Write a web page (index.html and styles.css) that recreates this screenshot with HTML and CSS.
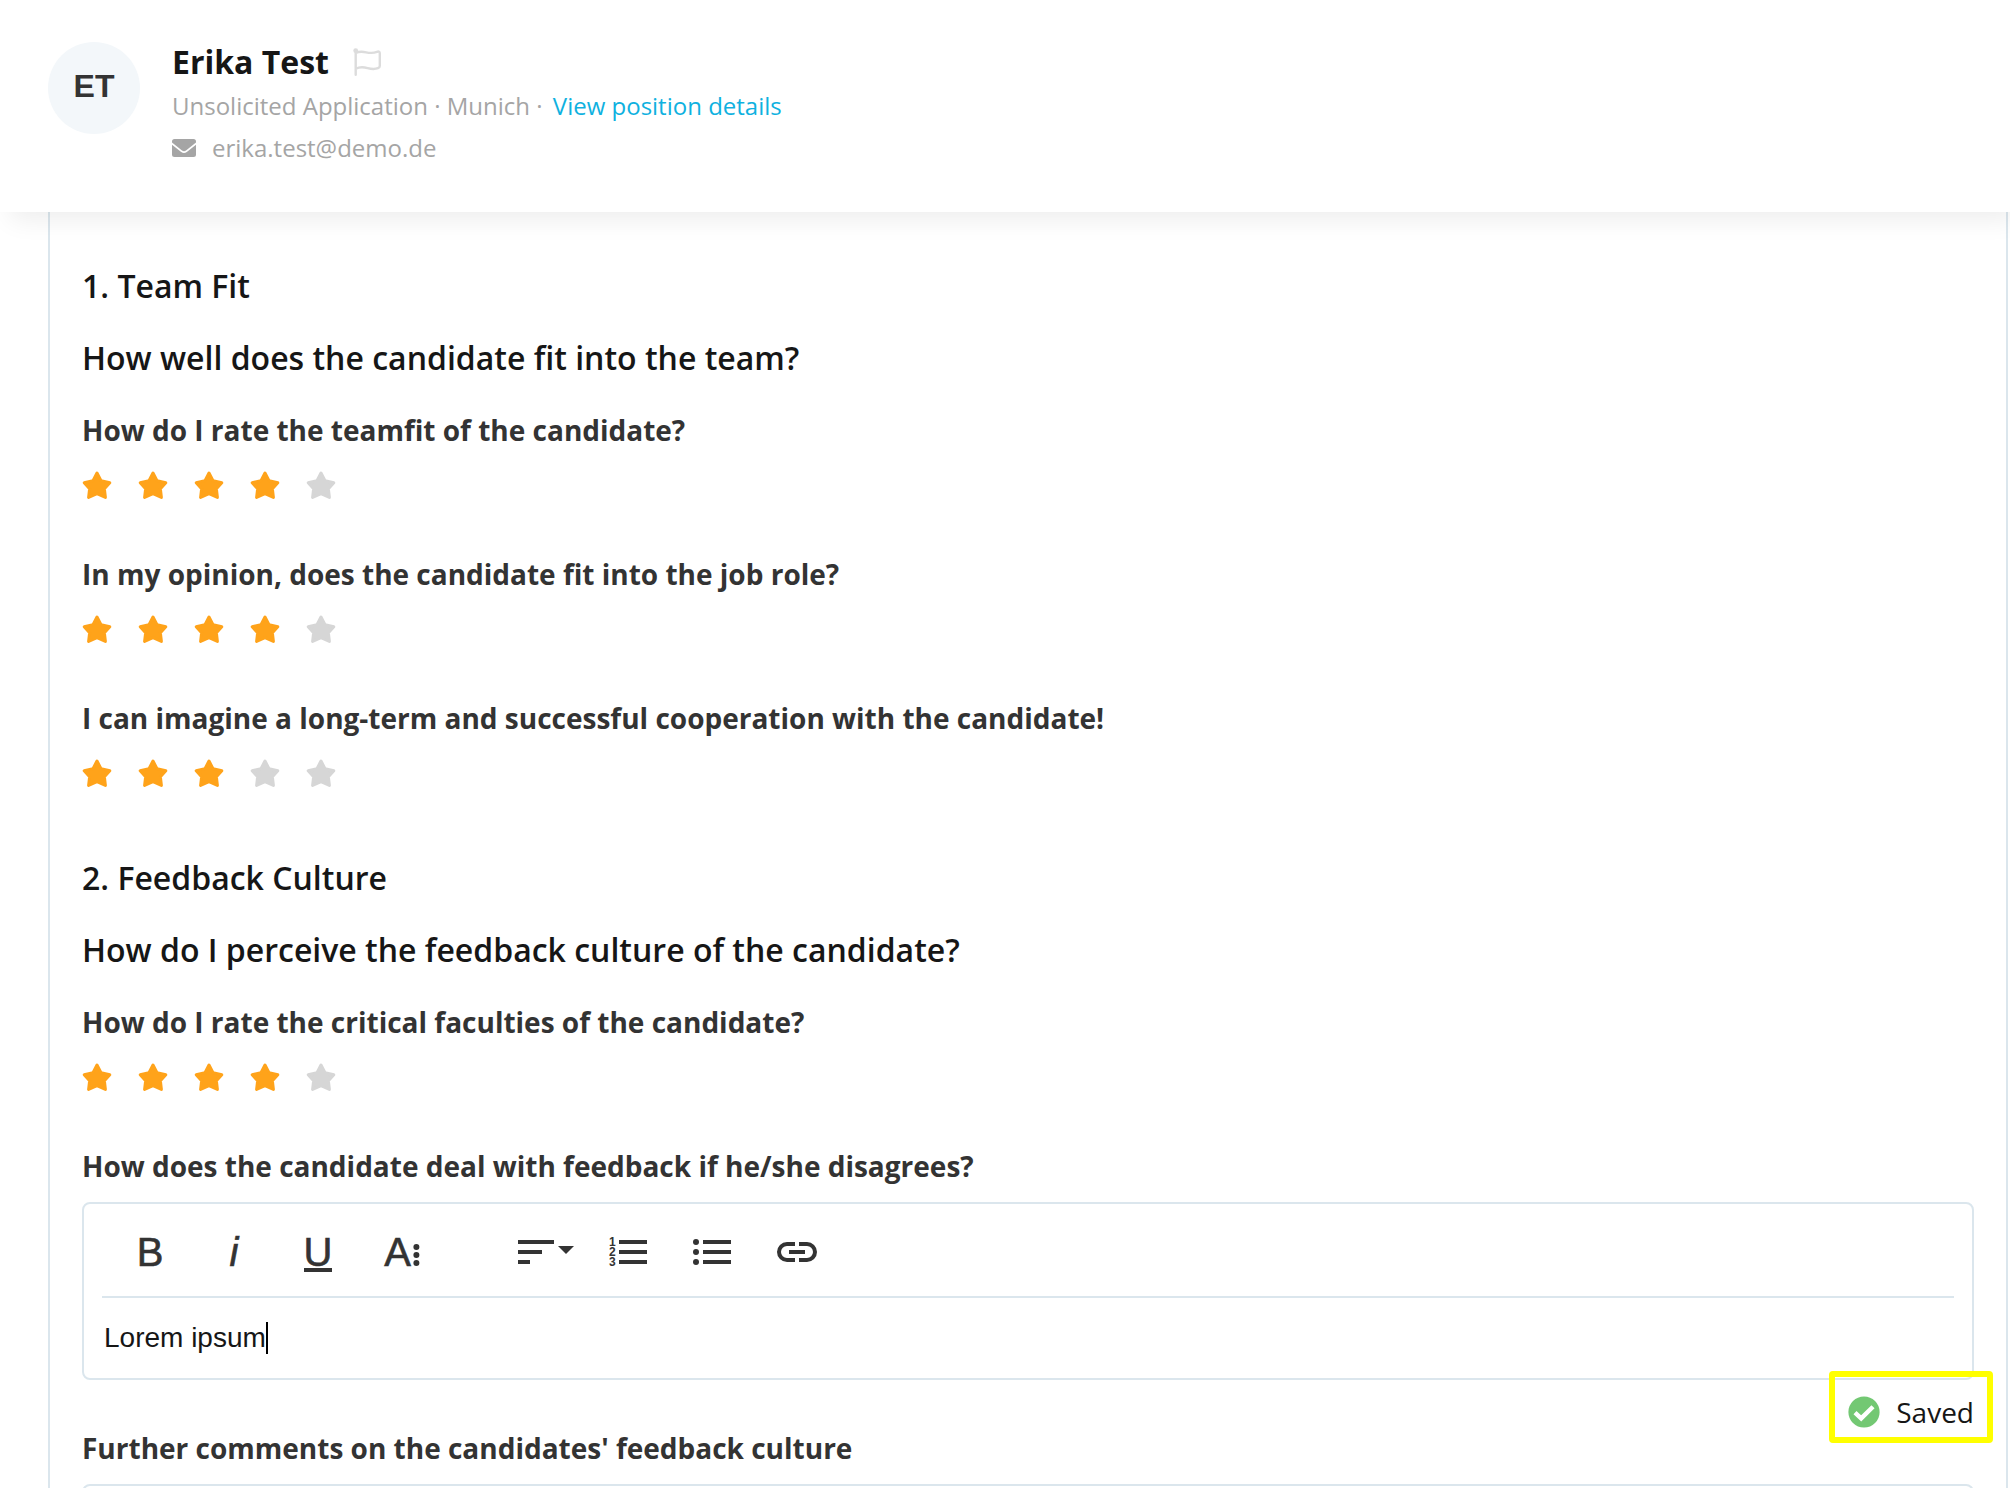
FILE: index.html
```html
<!DOCTYPE html>
<html lang="en">
<head>
    <meta charset="UTF-8">
    <meta name="viewport" content="width=device-width, initial-scale=1.0">
    <title>Erika Test</title>
    <link rel="stylesheet" href="styles.css">
</head>
<body>
    <svg width="0" height="0" class="sprite" aria-hidden="true">
        <symbol id="star" viewBox="0 0 30 30">
            <path d="M15 3 L19 10.6 L27.8 12.8 L22.4 18.8 L23.4 27.4 L15 23.6 L6.6 27.4 L7.6 18.8 L2.2 12.8 L11 10.6 Z" fill="currentColor" stroke="currentColor" stroke-width="3" stroke-linejoin="round"/>
        </symbol>
    </svg>

    <header class="header">
        <div class="avatar">ET</div>
        <div class="candidate">
            <div class="name-row">
                <h1>Erika Test</h1>
                <button class="flag" aria-label="Flag candidate">
                    <svg viewBox="0 0 28 28" width="28" height="28">
                        <circle cx="2.7" cy="2.7" r="2.4" fill="currentColor"/>
                        <path d="M2.7 3 V26.7 M2.7 5 C11 1 15 7.5 24 3.8 Q26.8 2.8 26.8 5.5 V18 Q26.8 19.5 25 20.2 C16 23.5 12 16 2.7 20.8" fill="none" stroke="currentColor" stroke-width="2.4" stroke-linecap="round"/>
                    </svg>
                </button>
            </div>
            <p>Unsolicited Application · Munich · <a href="#">View position details</a></p>
            <p class="mail">
                <svg viewBox="0 0 24 18" width="24" height="18">
                    <path d="M2.5 0 H21.5 Q24 0 24 2.5 V3.5 L14 11.6 Q12 13 10 11.6 L0 3.5 V2.5 Q0 0 2.5 0 Z M0 5.8 L9.2 13 Q12 15 14.8 13 L24 5.8 V15.5 Q24 18 21.5 18 H2.5 Q0 18 0 15.5 Z" fill="currentColor"/>
                </svg>
                erika.test@demo.de
            </p>
        </div>
    </header>

    <main class="content">
        <form class="panel">
            <section>
                <h2>1. Team Fit</h2>
                <h2>How well does the candidate fit into the team?</h2>

                <fieldset>
                    <legend>How do I rate the teamfit of the candidate?</legend>
                    <div class="stars">
                        <label class="star"><input type="radio" name="teamfit" aria-label="1 star"><svg><use href="#star"/></svg></label>
                        <label class="star"><input type="radio" name="teamfit" aria-label="2 stars"><svg><use href="#star"/></svg></label>
                        <label class="star"><input type="radio" name="teamfit" aria-label="3 stars"><svg><use href="#star"/></svg></label>
                        <label class="star"><input type="radio" name="teamfit" aria-label="4 stars" checked><svg><use href="#star"/></svg></label>
                        <label class="star"><input type="radio" name="teamfit" aria-label="5 stars"><svg><use href="#star"/></svg></label>
                    </div>
                </fieldset>

                <fieldset>
                    <legend>In my opinion, does the candidate fit into the job role?</legend>
                    <div class="stars">
                        <label class="star"><input type="radio" name="role" aria-label="1 star"><svg><use href="#star"/></svg></label>
                        <label class="star"><input type="radio" name="role" aria-label="2 stars"><svg><use href="#star"/></svg></label>
                        <label class="star"><input type="radio" name="role" aria-label="3 stars"><svg><use href="#star"/></svg></label>
                        <label class="star"><input type="radio" name="role" aria-label="4 stars" checked><svg><use href="#star"/></svg></label>
                        <label class="star"><input type="radio" name="role" aria-label="5 stars"><svg><use href="#star"/></svg></label>
                    </div>
                </fieldset>

                <fieldset>
                    <legend>I can imagine a long-term and successful cooperation with the candidate!</legend>
                    <div class="stars">
                        <label class="star"><input type="radio" name="cooperation" aria-label="1 star"><svg><use href="#star"/></svg></label>
                        <label class="star"><input type="radio" name="cooperation" aria-label="2 stars"><svg><use href="#star"/></svg></label>
                        <label class="star"><input type="radio" name="cooperation" aria-label="3 stars" checked><svg><use href="#star"/></svg></label>
                        <label class="star"><input type="radio" name="cooperation" aria-label="4 stars"><svg><use href="#star"/></svg></label>
                        <label class="star"><input type="radio" name="cooperation" aria-label="5 stars"><svg><use href="#star"/></svg></label>
                    </div>
                </fieldset>
            </section>

            <section>
                <h2>2. Feedback Culture</h2>
                <h2>How do I perceive the feedback culture of the candidate?</h2>

                <fieldset>
                    <legend>How do I rate the critical faculties of the candidate?</legend>
                    <div class="stars">
                        <label class="star"><input type="radio" name="faculties" aria-label="1 star"><svg><use href="#star"/></svg></label>
                        <label class="star"><input type="radio" name="faculties" aria-label="2 stars"><svg><use href="#star"/></svg></label>
                        <label class="star"><input type="radio" name="faculties" aria-label="3 stars"><svg><use href="#star"/></svg></label>
                        <label class="star"><input type="radio" name="faculties" aria-label="4 stars" checked><svg><use href="#star"/></svg></label>
                        <label class="star"><input type="radio" name="faculties" aria-label="5 stars"><svg><use href="#star"/></svg></label>
                    </div>
                </fieldset>

                <div class="field">
                    <label class="question" for="disagree">How does the candidate deal with feedback if he/she disagrees?</label>
                    <div class="editor">
                        <div class="toolbar">
                            <div class="group">
                                <button type="button" aria-label="Bold"><svg viewBox="0 0 24 24"><text x="12" y="19" text-anchor="middle">B</text></svg></button>
                                <button type="button" aria-label="Italic"><svg viewBox="0 0 24 24"><text x="12" y="19" text-anchor="middle" font-style="italic">i</text></svg></button>
                                <button type="button" aria-label="Underline"><svg viewBox="0 0 24 24"><text x="12" y="19" text-anchor="middle">U</text><rect x="5" y="20" width="14" height="2"/></svg></button>
                                <button type="button" aria-label="More text">
                                    <svg viewBox="0 0 24 24">
                                        <text x="9.8" y="19" text-anchor="middle">A</text>
                                        <circle cx="19.2" cy="9.5" r="1.5"/>
                                        <circle cx="19.2" cy="13.5" r="1.5"/>
                                        <circle cx="19.2" cy="17.5" r="1.5"/>
                                    </svg>
                                </button>
                            </div>
                            <div class="group">
                                <button type="button" class="dropdown" aria-label="Align">
                                    <svg viewBox="0 0 24 24"><path d="M3 6h18v2H3z M3 11h12v2H3z M3 16h6v2H3z"/></svg>
                                    <span class="arrow"></span>
                                </button>
                                <button type="button" aria-label="Ordered list">
                                    <svg viewBox="0 0 24 24">
                                        <path d="M7 6h14v2H7z M7 11h14v2H7z M7 16h14v2H7z"/>
                                        <g class="digits"><text x="2" y="9">1</text><text x="2" y="14">2</text><text x="2" y="19">3</text></g>
                                    </svg>
                                </button>
                                <button type="button" aria-label="Unordered list">
                                    <svg viewBox="0 0 24 24">
                                        <path d="M7 6h14v2H7z M7 11h14v2H7z M7 16h14v2H7z"/>
                                        <circle cx="3.5" cy="7" r="1.5"/>
                                        <circle cx="3.5" cy="12" r="1.5"/>
                                        <circle cx="3.5" cy="17" r="1.5"/>
                                    </svg>
                                </button>
                                <button type="button" aria-label="Insert link">
                                    <svg viewBox="0 0 24 24"><path d="M11 17H7A5 5 0 0 1 7 7h4v2H7a3 3 0 0 0 0 6h4zM17 7h-4v2h4a3 3 0 0 1 0 6h-4v2h4a5 5 0 0 0 0-10zM16 11H8v2h8z"/></svg>
                                </button>
                            </div>
                        </div>
                        <div class="text">
                            <textarea id="disagree" rows="1">Lorem ipsum</textarea>
                            <span class="caret"></span>
                        </div>
                        <div class="saved" role="status">
                            <svg viewBox="0 0 32 32" width="32" height="32">
                                <circle cx="16" cy="16" r="15.6" fill="#73c873"/>
                                <path d="M7 16.6 L13.2 22.4 L25 10.8" fill="none" stroke="#fff" stroke-width="4.4"/>
                            </svg>
                            Saved
                        </div>
                    </div>
                </div>

                <div class="field">
                    <label class="question" for="comments">Further comments on the candidates' feedback culture</label>
                    <div class="editor">
                        <div class="text">
                            <textarea id="comments" rows="1"></textarea>
                        </div>
                    </div>
                </div>
            </section>
        </form>
    </main>
</body>
</html>
```
FILE: styles.css
```css
* {
    box-sizing: border-box;
}
body {
    margin: 0;
    height: 100vh;
    display: flex;
    flex-direction: column;
    overflow: hidden;
    background: #fff;
    color: #161616;
    font-family: "Open Sans", sans-serif;
    font-size: 28px;
}
h1, h2, p, fieldset, legend {
    margin: 0;
    padding: 0;
    border: 0;
}
button {
    padding: 0;
    border: none;
    background: none;
    color: inherit;
    cursor: pointer;
}
.sprite {
    position: absolute;
}

/* Header */
.header {
    position: relative;
    z-index: 1;
    display: flex;
    gap: 32px;
    padding: 41px 48px 43px;
    background: #fff;
    box-shadow: 8px 10px 24px -2px rgba(0, 0, 0, 0.07);
}
.avatar {
    width: 92px;
    height: 92px;
    margin-top: 1px;
    border-radius: 50%;
    background: #f3f7fa;
    color: #333;
    font-family: "Liberation Sans", Arial, sans-serif;
    font-size: 32px;
    font-weight: bold;
    line-height: 88px;
    text-align: center;
}
.candidate {
    color: #a5a5a5;
    font-size: 24px;
    line-height: 42px;
}
.name-row {
    display: flex;
    align-items: center;
    gap: 24px;
    margin-bottom: 2px;
}
.name-row h1 {
    color: #161616;
    font-size: 32px;
    font-weight: bold;
}
.flag {
    display: flex;
    color: #dcdcdc;
}
.candidate a {
    margin-left: 4px;
    color: #0fb1e0;
    text-decoration: none;
}
.mail {
    display: flex;
    align-items: center;
    gap: 16px;
}

/* Evaluation form */
.content {
    flex: 1;
    min-height: 0;
    overflow: hidden;
    padding: 0 2px 0 48px;
}
.panel {
    padding: 52px 32px;
    border: 2px solid #dbe6ed;
    border-width: 0 2px;
}
section + section {
    margin-top: 68px;
}
h2 {
    margin-bottom: 28px;
    font-size: 32px;
    font-weight: 600;
    line-height: 44px;
}
h2 + fieldset {
    margin-top: 30px;
}
fieldset + fieldset,
fieldset + .field {
    margin-top: 54px;
}
.field + .field {
    margin-top: 48px;
}
legend, .question {
    display: block;
    color: #333;
    font-weight: bold;
    line-height: 40px;
}
.stars {
    display: flex;
    gap: 26px;
    padding-top: 20px;
}
.star {
    display: flex;
    color: #d6d6d6;
    cursor: pointer;
}
.star svg {
    width: 30px;
    height: 30px;
}
.star input {
    position: absolute;
    opacity: 0;
    pointer-events: none;
}
.star:has(input:checked),
.star:has(~ .star input:checked) {
    color: #ffa31a;
}

/* Rich text editor */
.editor {
    position: relative;
    margin-top: 16px;
    padding: 0 18px;
    border: 2px solid #dbe6ed;
    border-radius: 8px;
}
.toolbar {
    display: flex;
    gap: 67px;
    padding: 10px 10px 6px;
    border-bottom: 2px solid #dbe6ed;
    color: #333;
}
.group {
    display: flex;
    gap: 8px;
}
.toolbar button {
    display: flex;
    align-items: center;
    justify-content: center;
    width: 76px;
    height: 76px;
}
.toolbar svg {
    width: 48px;
    height: 48px;
    fill: currentColor;
    font-family: "Liberation Sans", Arial, sans-serif;
    font-size: 20px;
}
.toolbar text {
    stroke: currentColor;
    stroke-width: 0.3px;
}
.toolbar .digits {
    font-size: 6px;
    font-weight: bold;
}
.toolbar .digits text {
    stroke: none;
}
.arrow {
    margin: -4px 0 0 -2px;
    border: 8px solid transparent;
    border-top-color: #333;
    border-bottom: none;
}
.toolbar .dropdown svg {
    margin-left: -4px;
    flex-shrink: 0;
}
.text {
    display: flex;
    padding: 24px 2px;
}
textarea {
    field-sizing: content;
    display: block;
    padding: 0;
    border: none;
    outline: none;
    resize: none;
    background: none;
    color: #161616;
    font-family: "Liberation Sans", Arial, sans-serif;
    font-size: 28px;
    line-height: 32px;
}
.caret {
    width: 2px;
    background: #000;
}
.saved {
    position: absolute;
    top: 167px;
    right: -21px;
    display: flex;
    align-items: center;
    gap: 16px;
    padding: 15px 13px 5px;
    border: 6px solid #ff0;
    border-radius: 4px;
    line-height: 40px;
}
```
